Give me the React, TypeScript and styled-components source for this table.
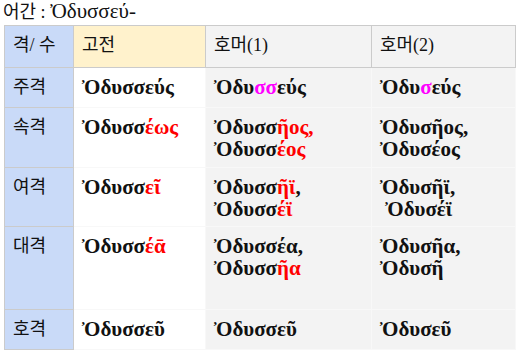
import styled, { createGlobalStyle } from "styled-components";

const GlobalStyle = createGlobalStyle`
    body {
        margin: 0;
        background: #fff;
    }
`

const Page = styled.div`
    padding: 0 4px;
    font-family: "Liberation Serif", "Noto Sans CJK KR", serif;
    color: #111;
`

const Title = styled.div`
    font-size: 18px;
    line-height: 24px;
    height: 25px;
    margin-left: -1px;
`

const Stem = styled.span`
    font-size: 21px;
    line-height: 20px;
`

const Table = styled.table`
    border-collapse: collapse;
    table-layout: fixed;
    width: 511px;
`

const Row = styled.tr<{ $h: number }>`
    height: ${p => p.$h}px;
`

const HeadCell = styled.th<{ $bg: string }>`
    background: ${p => p.$bg};
    border: 1px solid #cbcbcb;
    font-weight: normal;
    font-size: 18px;
    line-height: 22px;
    text-align: left;
    vertical-align: top;
    padding: 8px 8px 4px;
`

const CaseCell = styled.td`
    background: #c9daf8;
    border: 1px solid #cbcbcb;
    font-size: 18px;
    vertical-align: top;
    padding: 8px 8px 4px;
`

const CaseName = styled.div`
    height: 22px;
    line-height: 22px;
`

const FormCell = styled.td<{ $shade?: boolean }>`
    background: ${p => (p.$shade ? "#f3f3f3" : "#fff")};
    border: 1px solid #f8f8f8;
    font-size: 21px;
    font-weight: bold;
    line-height: 22px;
    vertical-align: top;
    padding: 8px 8px 4px;
`

const Form = styled.div`
    height: 22px;
    white-space: nowrap;
`

const Mark = styled.span<{ $c: string }>`
    color: ${p => p.$c};
`

const RED = "#ff0000";
const PINK = "#ff00ff";

export default function App() {
    return (
        <Page>
            <GlobalStyle />
            <Title>어간 : <Stem>Ὀδυσσεύ-</Stem></Title>
            <Table>
                <colgroup>
                    <col style={{ width: 69 }} />
                    <col style={{ width: 132 }} />
                    <col style={{ width: 166 }} />
                    <col style={{ width: 144 }} />
                </colgroup>
                <thead>
                    <Row $h={42}>
                        <HeadCell $bg="#c9daf8">격/ 수</HeadCell>
                        <HeadCell $bg="#fff2cc">고전</HeadCell>
                        <HeadCell $bg="#f3f3f3">호머(1)</HeadCell>
                        <HeadCell $bg="#f3f3f3">호머(2)</HeadCell>
                    </Row>
                </thead>
                <tbody>
                    <Row $h={40}>
                        <CaseCell><CaseName>주격</CaseName></CaseCell>
                        <FormCell><Form>Ὀδυσσεύς</Form></FormCell>
                        <FormCell $shade><Form>Ὀδυ<Mark $c={PINK}>σσ</Mark>εύς</Form></FormCell>
                        <FormCell $shade><Form>Ὀδυ<Mark $c={PINK}>σ</Mark>εύς</Form></FormCell>
                    </Row>
                    <Row $h={60}>
                        <CaseCell><CaseName>속격</CaseName></CaseCell>
                        <FormCell><Form>Ὀδυσσ<Mark $c={RED}>έως</Mark></Form></FormCell>
                        <FormCell $shade>
                            <Form>Ὀδυσσ<Mark $c={RED}>ῆος,</Mark></Form>
                            <Form>Ὀδυσσ<Mark $c={RED}>έος</Mark></Form>
                        </FormCell>
                        <FormCell $shade>
                            <Form>Ὀδυσῆος,</Form>
                            <Form>Ὀδυσέος</Form>
                        </FormCell>
                    </Row>
                    <Row $h={59}>
                        <CaseCell><CaseName>여격</CaseName></CaseCell>
                        <FormCell><Form>Ὀδυσσ<Mark $c={RED}>εῖ</Mark></Form></FormCell>
                        <FormCell $shade>
                            <Form>Ὀδυσσ<Mark $c={RED}>ῆϊ</Mark>,</Form>
                            <Form>Ὀδυσσ<Mark $c={RED}>έϊ</Mark></Form>
                        </FormCell>
                        <FormCell $shade>
                            <Form>Ὀδυσῆϊ,</Form>
                            <Form>&nbsp;Ὀδυσέϊ</Form>
                        </FormCell>
                    </Row>
                    <Row $h={83}>
                        <CaseCell><CaseName>대격</CaseName></CaseCell>
                        <FormCell><Form>Ὀδυσσ<Mark $c={RED}>έᾱ</Mark></Form></FormCell>
                        <FormCell $shade>
                            <Form>Ὀδυσσέα,</Form>
                            <Form>Ὀδυσσ<Mark $c={RED}>ῆα</Mark></Form>
                        </FormCell>
                        <FormCell $shade>
                            <Form>Ὀδυσῆα,</Form>
                            <Form>Ὀδυσῆ</Form>
                        </FormCell>
                    </Row>
                    <Row $h={40}>
                        <CaseCell><CaseName>호격</CaseName></CaseCell>
                        <FormCell><Form>Ὀδυσσεῦ</Form></FormCell>
                        <FormCell $shade><Form>Ὀδυσσεῦ</Form></FormCell>
                        <FormCell $shade><Form>Ὀδυσεῦ</Form></FormCell>
                    </Row>
                </tbody>
            </Table>
        </Page>
    )
}
